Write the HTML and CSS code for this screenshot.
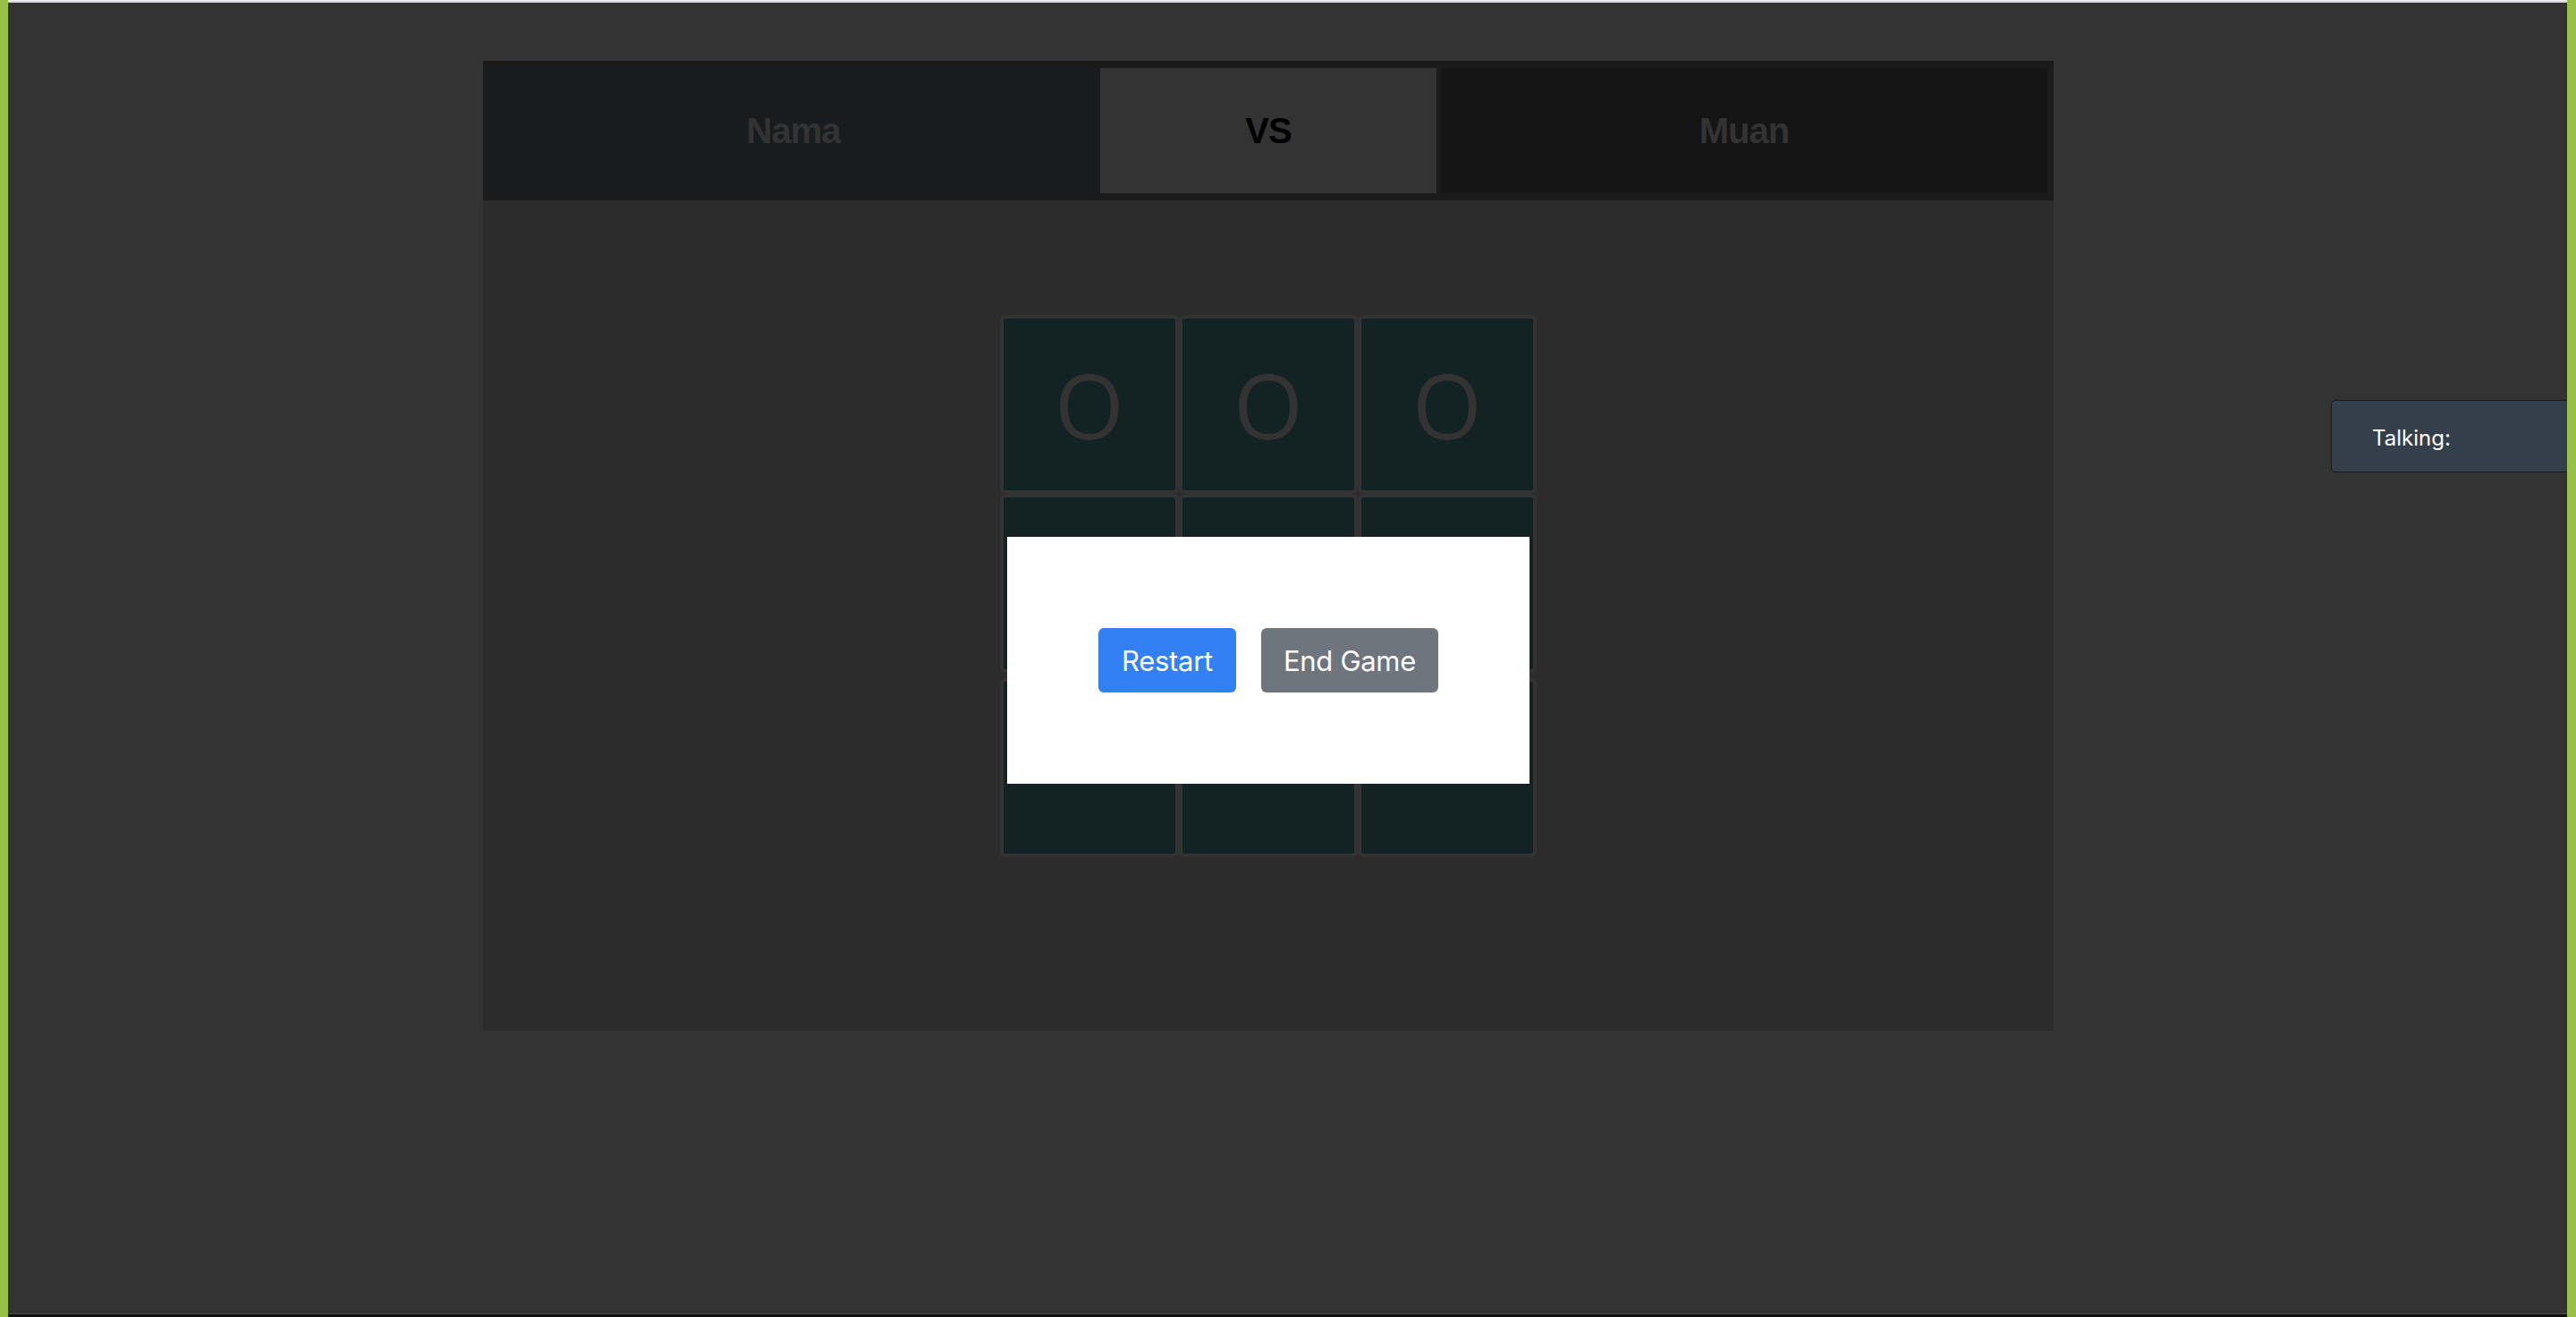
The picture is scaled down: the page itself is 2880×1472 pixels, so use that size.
FILE: index.html
```html
<!DOCTYPE html>
<html lang="en">
<head>
<meta charset="utf-8">
<title>Tic Tac Toe</title>
<link rel="stylesheet" href="styles.css">
</head>
<body>
  <div class="edge edge-left"></div>
  <div class="main">
    <div class="topline"></div>
    <div class="content">
      <div class="game">
        <div class="players">
          <div class="player player-one">Nama</div>
          <div class="versus">VS</div>
          <div class="player player-two">Muan</div>
        </div>
        <div class="arena">
          <div class="board">
            <div class="row">
              <div class="cell">O</div>
              <div class="cell">O</div>
              <div class="cell">O</div>
            </div>
            <div class="row">
              <div class="cell"></div>
              <div class="cell"></div>
              <div class="cell"></div>
            </div>
            <div class="row row-last">
              <div class="cell"></div>
              <div class="cell"></div>
              <div class="cell"></div>
            </div>
          </div>
          <div class="dialog">
            <button class="btn btn-primary">Restart</button>
            <button class="btn btn-secondary">End Game</button>
          </div>
        </div>
      </div>
      <div class="talking">Talking:</div>
    </div>
    <div class="bottomline"></div>
  </div>
  <div class="edge edge-right"></div>
</body>
</html>
```

FILE: styles.css
```css
html, body {
  margin: 0;
  padding: 0;
}

body {
  width: 2880px;
  height: 1472px;
  overflow: hidden;
  display: flex;
  background: #333333;
  font-family: Inter, "Noto Sans", sans-serif;
}

.edge {
  flex: none;
  background: #98bf46;
}

.edge-left {
  width: 9px;
}

.edge-right {
  width: 10px;
  position: relative;
  z-index: 2;
}

.main {
  flex: 1;
  display: flex;
  flex-direction: column;
  min-width: 0;
}

.topline {
  height: 3px;
  flex: none;
  background: linear-gradient(#f2f2f4 0 1px, #d6d6de 1px 3px);
}

.content {
  flex: 1;
  position: relative;
}

.bottomline {
  height: 4px;
  flex: none;
  box-sizing: border-box;
  border-top: 1px solid #4c4c4c;
  background: #0e0e0e;
}

.game {
  width: 1756px;
  margin: 65px 0 0 531px;
}

.players {
  display: flex;
  height: 156px;
  box-sizing: border-box;
  padding: 8px 7px 8px 4px;
  background: #1b1b1b;
}

.player,
.versus {
  display: flex;
  align-items: center;
  justify-content: center;
  font-family: "Liberation Sans", Arial, sans-serif;
  font-weight: bold;
  font-size: 40px;
  letter-spacing: -1px;
}

.player-one {
  width: 686px;
  background: #181c1f;
  color: #333333;
}

.versus {
  width: 376px;
  background: #333333;
  color: #000000;
}

.player-two {
  width: 678px;
  margin-left: 5px;
  background: #151515;
  color: #333333;
}

.arena {
  position: relative;
  height: 928px;
  box-sizing: border-box;
  padding-top: 128px;
  background: #2c2c2c;
}

.board {
  width: 600px;
  margin: 0 auto;
}

.row {
  display: flex;
}

.row-last {
  margin-top: 6px;
}

.cell {
  width: 200px;
  height: 200px;
  box-sizing: border-box;
  border: 4px solid #333333;
  border-radius: 6px;
  background: #132223;
  color: #333333;
  font-family: "Open Sans", Inter, sans-serif;
  font-size: 100px;
  line-height: 1;
  display: flex;
  align-items: center;
  justify-content: center;
}

.dialog {
  position: absolute;
  left: 586px;
  top: 376px;
  width: 584px;
  height: 276px;
  background: #ffffff;
  display: flex;
  align-items: center;
  justify-content: center;
  gap: 28px;
}

.btn {
  height: 72px;
  border: none;
  border-radius: 6px;
  padding: 0;
  color: #ffffff;
  font-family: Inter, "Noto Sans", sans-serif;
  font-size: 31px;
  letter-spacing: -0.3px;
  display: flex;
  align-items: center;
  justify-content: center;
}

.btn-primary {
  width: 154px;
  background: #3380f5;
}

.btn-secondary {
  width: 198px;
  background: #6f757c;
}

.talking {
  position: absolute;
  top: 444px;
  right: -40px;
  width: 304px;
  height: 81px;
  box-sizing: border-box;
  padding: 4px 0 0 45px;
  display: flex;
  align-items: center;
  border: 1px solid #1a1a1a;
  border-radius: 5px;
  background: #343f4b;
  color: #ffffff;
  font-size: 24px;
}
```
